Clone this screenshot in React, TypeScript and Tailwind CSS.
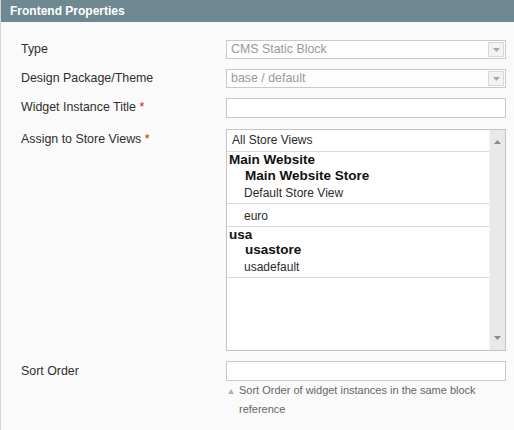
const Tri = ({ up, color = "#9c9c9c" }: { up?: boolean; color?: string }) => (
  <svg width="7" height="4" viewBox="0 0 7 4">
    <path d={up ? "M0 4 L3.5 0 L7 4 Z" : "M0 0 L7 0 L3.5 4 Z"} fill={color} />
  </svg>
);

function Label({ text, required }: { text: string; required?: boolean }) {
  return (
    <div className="w-[205px] shrink-0 pt-[1px] text-[12.4px] leading-[16px] text-[#2f2f2f]">
      {text}
      {required && <span className="text-[#d0200c]"> *</span>}
    </div>
  );
}

function DisabledSelect({ value }: { value: string }) {
  return (
    <div className="flex h-[19px] w-[280px] border border-[#c9c9c9] bg-[#fdfdfd]">
      <div className="flex-1 pl-[4px] text-[12.4px] leading-[16px] text-[#9a9a9a]">{value}</div>
      <div className="my-[1px] mr-[1px] flex w-[16px] items-center justify-center border border-[#d8d8d8] bg-[#f3f3f3]">
        <Tri color="#a8a8a8" />
      </div>
    </div>
  );
}

type Opt = { text: string; kind: "opt" | "group" | "store"; h: string; cls: string; line?: boolean };

const options: Opt[] = [
  { text: "All Store Views", kind: "opt", h: "h-[22px]", cls: "leading-[21px] pl-[5px]", line: true },
  { text: "Main Website", kind: "group", h: "h-[16px]", cls: "leading-[16px] pl-[2px]" },
  { text: "Main Website Store", kind: "store", h: "h-[15px]", cls: "leading-[15px] pl-[18px]" },
  { text: "Default Store View", kind: "opt", h: "h-[21px]", cls: "leading-[20px] pl-[17px]", line: true },
  { text: "euro", kind: "opt", h: "h-[23px]", cls: "leading-[20px] pt-[2px] pl-[17px]", line: true },
  { text: "usa", kind: "group", h: "h-[15px]", cls: "leading-[15px] pl-[2px]" },
  { text: "usastore", kind: "store", h: "h-[15px]", cls: "leading-[15px] pl-[18px]" },
  { text: "usadefault", kind: "opt", h: "h-[21px]", cls: "leading-[20px] pl-[17px]", line: true },
];

export default function App() {
  return (
    <div className="min-h-[430px] w-full border-l border-[#d6d6d6] bg-[#fafafa] font-['Liberation_Sans',Arial,sans-serif]">
      <div className="h-[22px] bg-[#6f8992] pl-[9px] text-[12px] font-bold leading-[22px] text-white">
        Frontend Properties
      </div>

      <div className="flex flex-col pl-[20px] pt-[18px]">
        <div className="mb-[10px] flex">
          <Label text="Type" />
          <DisabledSelect value="CMS Static Block" />
        </div>

        <div className="mb-[10px] flex">
          <Label text="Design Package/Theme" />
          <DisabledSelect value="base / default" />
        </div>

        <div className="mb-[11px] flex">
          <Label text="Widget Instance Title" required />
          <div className="h-[20px] w-[280px] border border-[#c9c9c9] bg-white" />
        </div>

        <div className="mb-[10px] flex">
          <div className="pt-[1px]">
            <Label text="Assign to Store Views" required />
          </div>
          <div className="flex h-[222px] w-[280px] border border-[#c4c4c4] bg-white">
            <div className="flex-1">
              {options.map((o) => (
                <div
                  key={o.text}
                  className={`${o.h} ${o.cls} ${o.line ? "border-b border-[#d9d9d9]" : ""} ${
                    o.kind === "opt"
                      ? "text-[12px] text-[#2b2b2b]"
                      : "text-[13.5px] font-bold text-[#111]"
                  }`}
                >
                  {o.text}
                </div>
              ))}
            </div>
            <div className="flex w-[16px] flex-col border-l border-[#f4f4f4] bg-[#e9e9e9]">
              <div className="flex h-[17px] items-end justify-center pb-[3px]">
                <Tri up color="#8a8a8a" />
              </div>
              <div className="flex-1" />
              <div className="flex h-[17px] items-start justify-center pt-[3px]">
                <Tri color="#8a8a8a" />
              </div>
            </div>
          </div>
        </div>

        <div className="flex">
          <div className="pt-[1px]">
            <Label text="Sort Order" />
          </div>
          <div className="flex w-[280px] flex-col">
            <div className="h-[20px] border border-[#c9c9c9] bg-white" />
            <div className="flex pt-[6px] text-[11px] leading-[19px] text-[#666]">
              <div className="w-[13px] shrink-0 pl-[2px] pt-[2px]">
                <svg width="6" height="5" viewBox="0 0 6 5">
                  <path d="M0 5 L3 0 L6 5 Z" fill="#b4b4b4" />
                </svg>
              </div>
              <div className="-mt-[6px]">Sort Order of widget instances in the same block reference</div>
            </div>
          </div>
        </div>
      </div>
    </div>
  );
}
